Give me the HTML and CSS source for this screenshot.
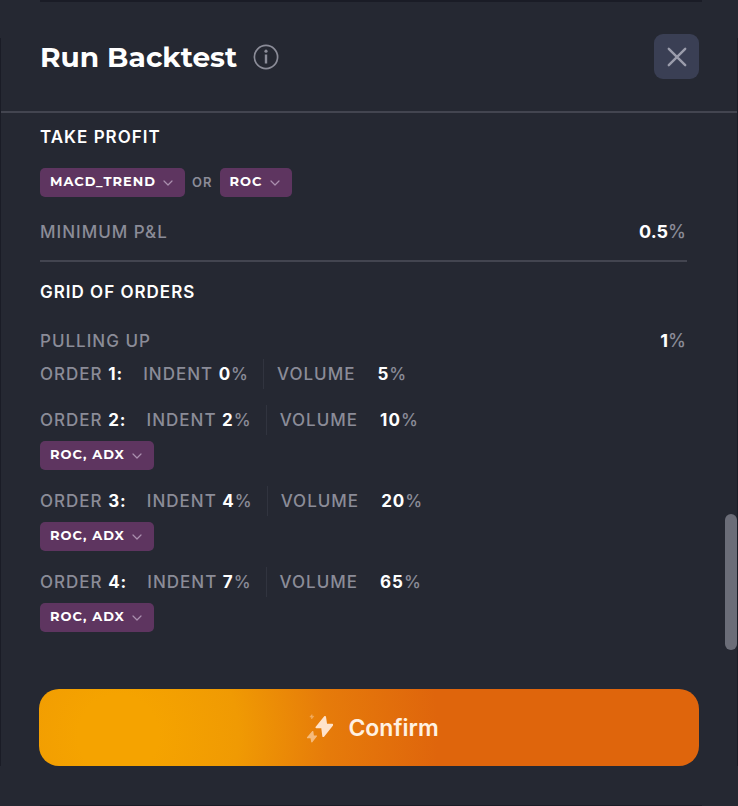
FILE: index.html
```html
<!DOCTYPE html>
<html lang="en">
  <head>
    <meta charset="UTF-8" />
    <meta name="viewport" content="width=device-width, initial-scale=1.0" />
    <title>Run Backtest</title>
    <link rel="stylesheet" href="styles.css">
  </head>
  <body>
    <svg width="0" height="0" class="sprite" aria-hidden="true">
      <symbol id="chevron" viewBox="0 0 10 6">
        <path d="M1 1l4 4 4-4" fill="none" stroke="currentColor" stroke-width="1.2" stroke-linecap="round" stroke-linejoin="round" />
      </symbol>
    </svg>

    <div class="modal">
      <header class="header">
        <h2>Run Backtest</h2>
        <svg class="info" viewBox="0 0 26 26" fill="none" stroke="currentColor">
          <circle cx="13" cy="13" r="11.6" stroke-width="1.7" />
          <path d="M13 10.500v9" stroke-width="2.400" />
          <circle cx="13" cy="7.200" r="1.600" fill="currentColor" stroke="none" />
        </svg>
        <button class="close" aria-label="Close">
          <svg viewBox="0 0 20 20" fill="none" stroke="currentColor" stroke-width="2.4" stroke-linecap="round">
            <path d="M1.800 1.800l16.400 16.400M18.200 1.800l-16.400 16.400" />
          </svg>
        </button>
      </header>

      <main class="content">
        <section class="take-profit">
          <h3>Take profit</h3>
          <div class="chips">
            <button class="chip">MACD_TREND <svg><use href="#chevron" /></svg></button>
            <span class="or">OR</span>
            <button class="chip">ROC <svg><use href="#chevron" /></svg></button>
          </div>
          <div class="row">
            <span>Minimum P&amp;L</span>
            <span class="value"><b>0.5</b>%</span>
          </div>
        </section>

        <section class="grid-orders">
          <h3>Grid of orders</h3>
          <div class="row">
            <span>Pulling up</span>
            <span class="value"><b>1</b>%</span>
          </div>

          <div class="order">
            <div class="order-line">
              <span class="name">Order <b>1:</b></span>
              <span class="indent">Indent <b>0</b>%</span>
              <span class="volume">Volume</span>
              <span><b>5</b>%</span>
            </div>
          </div>
          <div class="order">
            <div class="order-line">
              <span class="name">Order <b>2:</b></span>
              <span class="indent">Indent <b>2</b>%</span>
              <span class="volume">Volume</span>
              <span><b>10</b>%</span>
            </div>
            <button class="chip">ROC, ADX <svg><use href="#chevron" /></svg></button>
          </div>
          <div class="order">
            <div class="order-line">
              <span class="name">Order <b>3:</b></span>
              <span class="indent">Indent <b>4</b>%</span>
              <span class="volume">Volume</span>
              <span><b>20</b>%</span>
            </div>
            <button class="chip">ROC, ADX <svg><use href="#chevron" /></svg></button>
          </div>
          <div class="order">
            <div class="order-line">
              <span class="name">Order <b>4:</b></span>
              <span class="indent">Indent <b>7</b>%</span>
              <span class="volume">Volume</span>
              <span><b>65</b>%</span>
            </div>
            <button class="chip">ROC, ADX <svg><use href="#chevron" /></svg></button>
          </div>
        </section>
        <div class="scroll-thumb"></div>
      </main>

      <footer class="footer">
        <button class="confirm">
          <svg viewBox="0 0 28 30" fill="currentColor" stroke="currentColor" stroke-linejoin="round">
            <path d="M20 4L11.500 14.300h5.700L18.300 23l9-11.200h-6.100z" stroke-width="2" />
            <path d="M7.800 18.500L2.500 24.700h3.500L6.800 29l4.700-6H8.300z" stroke-width="1.200" opacity="0.6" />
            <path d="M7 1.500L4.800 4h1.600L6.600 6l2.300-2.800H7.200z" stroke-width="0.500" opacity="0.45" />
          </svg>
          Confirm
        </button>
      </footer>
    </div>
  </body>
</html>
```

FILE: styles.css
```css
* {
  box-sizing: border-box;
}

body {
  margin: 0;
  font-family: Inter, sans-serif;
  background-color: #252832;
  color: #8b8c98;
}

.sprite {
  position: absolute;
}

.modal {
  position: relative;
  display: flex;
  flex-direction: column;
  min-height: 100vh;
}

/* thin dark outline with open corners */
.modal::before,
.modal::after {
  content: "";
  position: absolute;
  pointer-events: none;
}

.modal::before {
  top: 38px;
  bottom: 40px;
  left: 0;
  right: 0;
  border: solid #1a1c26;
  border-width: 0 1px;
}

.modal::after {
  top: 0;
  bottom: 0;
  left: 40px;
  right: 36px;
  border: solid #1a1c26;
  border-width: 2px 0 1px;
}

.header {
  display: flex;
  align-items: center;
  height: 113px;
  padding: 2px 39px 0 40px;
  border-bottom: 2px solid #434550;
}

h2 {
  margin: 0;
  font-family: Montserrat, Inter, sans-serif;
  font-size: 28px;
  font-weight: 700;
  line-height: 36px;
  color: #fff;
}

.info {
  width: 26px;
  height: 26px;
  margin-left: 16px;
}

.close {
  display: flex;
  align-items: center;
  justify-content: center;
  width: 45px;
  height: 45px;
  margin-left: auto;
  padding: 0;
  border: none;
  border-radius: 9px;
  background-color: #3a3f54;
  color: #9b9dac;
  cursor: pointer;
}

.close svg {
  width: 20px;
  height: 20px;
}

.content {
  position: relative;
  flex: 1;
  padding: 14px 51px 0 40px;
  font-size: 17px;
  font-weight: 500;
  line-height: 20px;
  letter-spacing: 1px;
  text-transform: uppercase;
}

h3 {
  margin: 0;
  font-size: 17px;
  font-weight: 600;
  line-height: 20px;
  color: #fff;
}

b {
  font-weight: 700;
  color: #fff;
}

.take-profit {
  padding-bottom: 18px;
  border-bottom: 2px solid #434550;
}

.chips {
  display: flex;
  align-items: center;
  gap: 7px;
  margin: 21px 0 25px;
}

.chip {
  display: flex;
  align-items: center;
  gap: 7px;
  height: 29px;
  padding: 0 12px 3px 10px;
  border: none;
  border-radius: 5px;
  background-color: #5e3560;
  color: #fff;
  font-family: Montserrat, Inter, sans-serif;
  font-size: 13px;
  font-weight: 700;
  line-height: 18px;
  letter-spacing: 1px;
  cursor: pointer;
}

.chip svg {
  width: 10px;
  height: 6px;
  margin-top: 4px;
  color: #aa8fae;
}

.or {
  font-size: 13px;
  font-weight: 600;
  line-height: 18px;
  padding-bottom: 2px;
}

.row {
  display: flex;
  justify-content: space-between;
}

.value {
  font-size: 18px;
}

.value b {
  letter-spacing: 0;
}

.grid-orders {
  padding-top: 20px;
}

.grid-orders .row {
  margin: 29px 0 8px;
}

.order {
  margin-bottom: 16px;
}

.order-line {
  display: flex;
  align-items: center;
  height: 30px;
}

.order .chip {
  margin-top: 6px;
}

.name {
  margin-right: 20px;
}

.indent {
  padding-right: 14px;
  line-height: 30px;
  border-right: 1px solid #31343f;
}

.volume {
  margin: 0 22px 0 13px;
}

.scroll-thumb {
  position: absolute;
  top: 401px;
  right: 1px;
  width: 12px;
  height: 136px;
  border-radius: 6px;
  background-color: #6b6d78;
}

.footer {
  padding: 40px 39px;
}

.confirm {
  display: flex;
  align-items: center;
  justify-content: center;
  gap: 15px;
  width: 100%;
  height: 77px;
  padding: 0 6px 0 12px;
  border: none;
  border-radius: 20px;
  background: radial-gradient(circle at 12% 60%, #f5a300 0, #f5a300 40px, #f09a03 120px, #e67b0a 210px, #df650c 320px);
  color: #fff1e2;
  font-family: Inter, sans-serif;
  font-size: 23px;
  font-weight: 600;
  line-height: 30px;
  cursor: pointer;
}

.confirm svg {
  width: 28px;
  height: 30px;
  color: #ffe3cb;
}
```
